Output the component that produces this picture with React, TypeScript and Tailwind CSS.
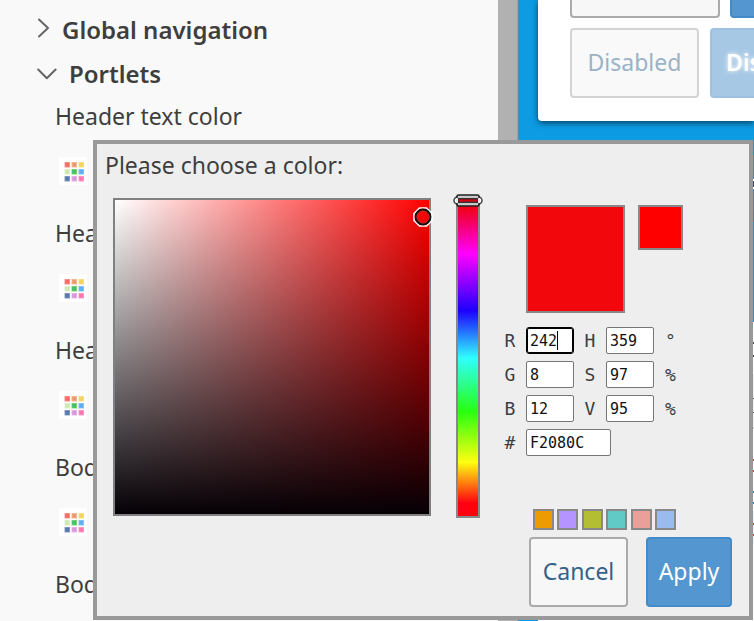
import { useState } from "react";

const SANS = "font-['Noto_Sans','Open_Sans',sans-serif]";
const MONO = "font-['DejaVu_Sans_Mono',monospace]";

const fields = ["Header text color", "Header", "Header", "Body", "Body"];

const iconCells = [
  "#fd6a63",
  "#f0a070",
  "#f5d262",
  "#cfe9b2",
  "#4ac53f",
  "#5caef7",
  "#5878ae",
  "#d898df",
  "#ff76b0",
];

const presets = [
  { name: "Orange", cls: "bg-[#ec9c00]" },
  { name: "Violet", cls: "bg-[#b594ff]" },
  { name: "Olive", cls: "bg-[#b4be32]" },
  { name: "Teal", cls: "bg-[#62cac6]" },
  { name: "Salmon", cls: "bg-[#eaa098]" },
  { name: "Light blue", cls: "bg-[#99bbf0]" },
];

const inputClass =
  "block h-[27px] w-full border bg-white pl-[3px] pt-[2px] text-[15px] text-[#111] outline-none";

function PaletteIcon() {
  return (
    <svg width="28" height="28" viewBox="0 0 28 28" aria-hidden="true">
      {iconCells.map((color, i) => {
        const x = 5.5 + (i % 3) * 7;
        const y = 5 + Math.floor(i / 3) * 7;
        return (
          <g key={color} fill={color}>
            <rect x={x} y={y} width="5.5" height="5.5" opacity="0.7" />
            <rect x={x + 0.75} y={y + 0.75} width="4" height="4" />
          </g>
        );
      })}
      <path d="M13.4 13.4h2v2.2h-2z" fill="#3cb6b0" />
      <path d="M14.5 6.8h1.8v1.8h-1.8z" fill="#d69070" />
    </svg>
  );
}

function Sidebar() {
  return (
    <aside className="w-[498px] shrink-0 overflow-hidden bg-[#f9f9f9] pt-2 text-[#3e3e3e]">
      <button className="flex h-11 w-full items-center pl-[37px] text-left text-2xl font-semibold">
        <svg width="14" height="20" viewBox="0 0 14 20" className="mb-1 mr-[11px]" fill="none" stroke="#666" strokeWidth="2" strokeLinecap="round" strokeLinejoin="round">
          <path d="M2 1.5l9 8.5-9 8.5" />
        </svg>
        Global navigation
      </button>
      <button className="flex h-11 w-full items-center pl-[37px] text-left text-2xl font-semibold">
        <svg width="20" height="12" viewBox="0 0 20 12" className="mr-3" fill="none" stroke="#666" strokeWidth="2" strokeLinecap="round" strokeLinejoin="round">
          <path d="M1.2 1.5l8.6 8.7 8.8-8.7" />
        </svg>
        Portlets
      </button>
      <div className="pl-[55px] pt-[6px]">
        {fields.map((label, i) => (
          <div key={i} className="h-[117px]">
            <p className="text-[23px] leading-7">{label}</p>
            <button aria-label={`Pick ${label}`} className="ml-1 mt-[27px] block bg-white">
              <PaletteIcon />
            </button>
          </div>
        ))}
      </div>
    </aside>
  );
}

function Preview() {
  return (
    <section className="flex min-w-0 flex-1 flex-col overflow-hidden border-l border-[#4f8db5] bg-[#0d9ce4] pl-[19px]">
      <div className="rounded-bl-sm bg-white pb-[23px] pl-8 shadow-[0_2px_6px_rgba(0,0,0,0.6)]">
        <div className="flex gap-[10px]">
          <div className="h-[18px] w-[150px] shrink-0 rounded-b-sm border-2 border-t-0 border-[#ababab] bg-[#f7f7f7]" />
          <div className="h-[18px] w-[150px] shrink-0 rounded-b-sm border-2 border-t-0 border-[#428bca] bg-[#5496cf]" />
        </div>
        <div className="mt-[10px] flex gap-[11px] text-[23px]">
          <button disabled className="h-[70px] w-[129px] shrink-0 rounded-sm border-2 border-[#d3d3d3] bg-[#f9f9f9] pb-[2px] text-[#9bb2c7]">
            Disabled
          </button>
          <button disabled className="h-[70px] w-[129px] shrink-0 rounded-sm border-2 border-[#9fc0e2] bg-[#a7c8e5] pb-[2px] font-semibold text-white [text-shadow:0_0_4px_#fff]">
            Disabled
          </button>
        </div>
      </div>
      {/* banner */}
      <div className="mt-[34px] h-[67px] bg-linear-to-b from-[#5a86ad] to-[#4a80b0] pt-6">
        <div className="h-[10px] border-y-2 border-white bg-[#3b5068]" />
      </div>
      <div className="h-[100px]" />
      <div className="flex-1 bg-white pt-5">
        <div className="h-[15px] border-y-2 border-[#444]" />
        <div className="mt-[17px] h-[55px] border-b-2 border-[#ccc] bg-[#eee] pt-6">
          <div className="h-[15px] border-y border-[#444]" />
        </div>
        <div className="mt-[30px] h-[13px] border-y-2 border-[#dc3545]" />
        <div className="mt-[19px] h-[13px] border-y-2 border-[#2585a3]" />
        <div className="mt-[7px] h-[33px] bg-[#e6f1f8] pt-3">
          <div className="h-[13px] border-y-2 border-[#dc3545]" />
        </div>
      </div>
    </section>
  );
}

function SaturationPanel() {
  return (
    <div className="relative size-[318px] shrink-0 border-2 border-[#808080] bg-[linear-gradient(to_top,#050005,transparent),linear-gradient(to_right,#fff,#f00)]">
      <svg width="20" height="20" viewBox="0 0 20 20" className="absolute right-[-4px] top-[7px]" fill="none">
        <path d="M6.5 1h7L19 6.500v7L13.500 19h-7L1 13.500v-7z" stroke="#fff" strokeWidth="1.600" />
        <circle cx="10" cy="10" r="7.400" stroke="#111" strokeWidth="2" />
        <circle cx="10" cy="10" r="6" stroke="#a33" strokeWidth="0.700" />
      </svg>
    </div>
  );
}

function HueSlider() {
  const [hue, setHue] = useState(359);

  return (
    <div className="relative ml-[25px] h-[320px] w-6 shrink-0 border-2 border-[#888] bg-[linear-gradient(to_bottom,#f00010_2%,#ff00ff_17%,#1e00ff_35%,#2fffff_50%,#28ff10_67%,#ffff10_83%,#ff0010_96%)]">
      <input
        type="range"
        aria-label="Hue"
        min={0}
        max={359}
        value={hue}
        onChange={(e) => setHue(Number(e.target.value))}
        className="absolute inset-0 h-full w-full opacity-0 [direction:rtl] [writing-mode:vertical-lr]"
      />
      <svg width="30" height="13" viewBox="0 0 30 13" className="pointer-events-none absolute left-[-5px] top-[-6px]" fill="none">
        <rect x="1" y="3" width="28" height="7" rx="3.500" fill="#fff" stroke="#444" strokeWidth="1.500" />
        <rect x="4" y="1" width="22" height="11" rx="1.500" fill="#c8c8c8" stroke="#222" strokeWidth="1.600" />
        <rect x="5" y="4.700" width="20" height="3.600" fill="#d80014" stroke="#333" strokeWidth="1.400" />
        <path d="M4 4v5M26 4v5" stroke="#fff" strokeWidth="1.800" />
      </svg>
    </div>
  );
}

function ChannelInput({ id, label, value, focused }: { id: string; label: string; value: string; focused?: boolean }) {
  return (
    <>
      <label htmlFor={id}>{label}</label>
      <div className="relative">
        <input
          id={id}
          defaultValue={value}
          className={
            focused
              ? `${inputClass} rounded-[3px] border-black ring-1 ring-inset ring-black`
              : `${inputClass} rounded-xs border-[#767676]`
          }
        />
        {focused && <span className="absolute left-[31px] top-1 h-[19px] w-px bg-black" />}
      </div>
    </>
  );
}

function ColorDialog() {
  return (
    <div role="dialog" aria-labelledby="dialog-title" className="absolute left-[93px] top-[140px] border-4 border-[#999] bg-[#eee] pb-[9px] pr-[17px]">
      <h2 id="dialog-title" className="pl-2 text-[23px] leading-[42px] text-[#3e3e3e]">
        Please choose a color:
      </h2>
      <div className="flex pl-4 pt-3">
        <SaturationPanel />
        <HueSlider />
        <div className="ml-[14px] pt-[7px]">
          <div className="flex gap-[13px] pl-8">
            <div className="h-[108px] w-[99px] border-2 border-[#888] bg-[#f2080c]" />
            <div className="size-[45px] border-2 border-[#888] bg-[#f00]" />
          </div>

          <div className={`mt-[14px] grid grid-cols-[32px_48px_32px_48px_33px] items-center gap-y-[7px] text-center text-lg leading-[27px] text-[#3e3e3e] ${MONO}`}>
            <ChannelInput id="red" label="R" value="242" focused />
            <ChannelInput id="hue" label="H" value="359" />
            <span>°</span>
            <ChannelInput id="green" label="G" value="8" />
            <ChannelInput id="saturation" label="S" value="97" />
            <span>%</span>
            <ChannelInput id="blue" label="B" value="12" />
            <ChannelInput id="brightness" label="V" value="95" />
            <span>%</span>
            <label htmlFor="hex">#</label>
            <div className="col-span-4 w-[85px]">
              <input id="hex" defaultValue="F2080C" className={`${inputClass} rounded-xs border-[#767676]`} />
            </div>
          </div>

          <div className="ml-[39px] mt-[53px] flex w-[143px] justify-between">
            {presets.map((p) => (
              <button key={p.name} aria-label={p.name} className={`size-[21px] border-2 border-[#888] ${p.cls}`} />
            ))}
          </div>

          <div className="mt-[7px] flex gap-[18px] pl-[35px] text-[23px]">
            <button className="h-[70px] w-[99px] rounded-sm border-2 border-[#ababab] bg-[#f7f7f7] pb-[2px] text-[#346187]">
              Cancel
            </button>
            <button className="h-[70px] w-[86px] rounded-sm border-2 border-[#428bca] bg-[#5496cf] pb-[2px] text-white">
              Apply
            </button>
          </div>
        </div>
      </div>
    </div>
  );
}

export default function App() {
  return (
    <div className={`relative flex h-screen overflow-hidden ${SANS}`}>
      <Sidebar />
      <div className="w-5 shrink-0 border-r border-[#a0a0a0] bg-[#b1b1b1]" />
      <Preview />
      <ColorDialog />
    </div>
  );
}
